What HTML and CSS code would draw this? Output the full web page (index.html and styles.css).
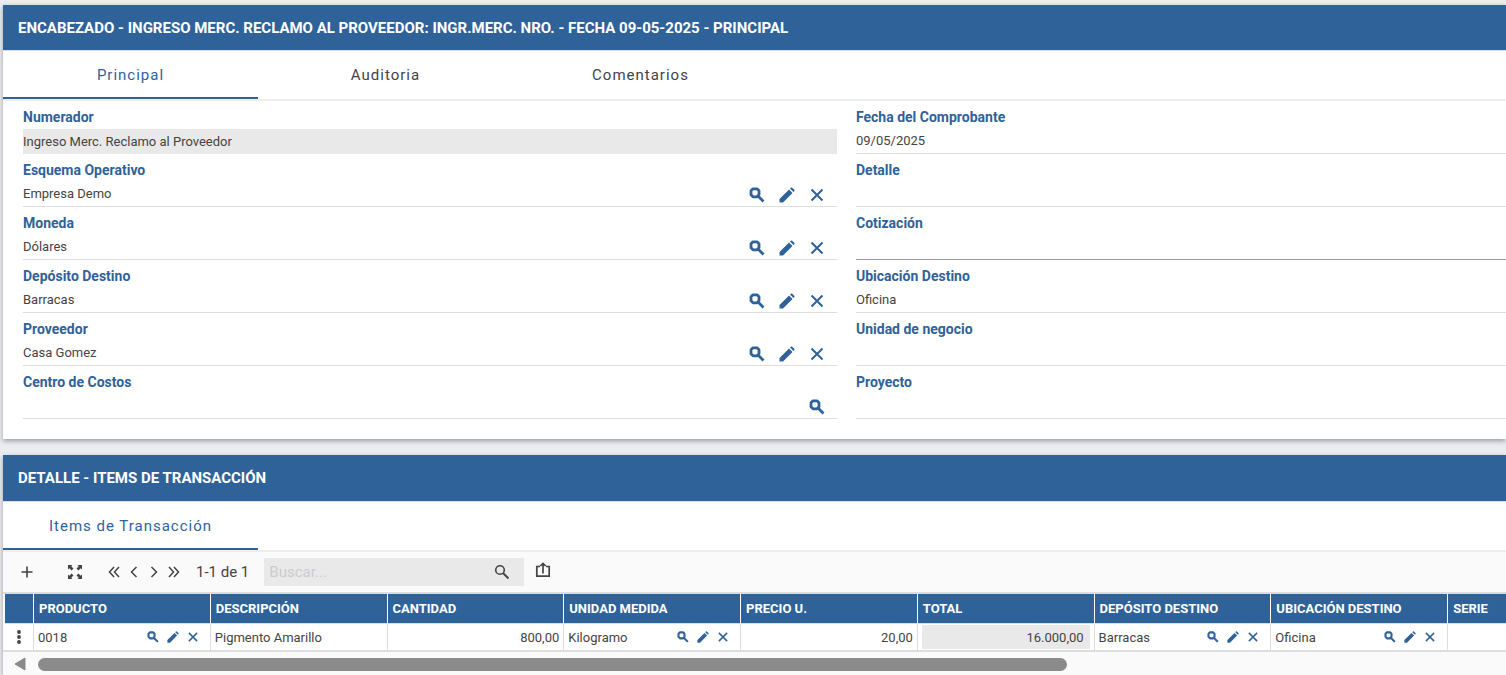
FILE: index.html
```
<!DOCTYPE html>
<html lang="es">
<head>
    <meta charset="utf-8">
    <title>Ingreso Merc. Reclamo al Proveedor</title>
    <link rel="stylesheet" href="styles.css">
</head>
<body>
    <!-- Shared icons -->
    <svg class="icon-defs" aria-hidden="true">
        <symbol id="search" viewBox="0 0 16 16"><path d="M4 1.800h4l2 2v4l-2 2H4l-2-2v-4zM9 9l5.500 5.500" fill="none" stroke="currentColor" stroke-width="2.800" stroke-linejoin="round"/></symbol>
        <symbol id="edit" viewBox="0 0 16 16"><path d="M.5 12 10 2.500 13.500 6 4 15.500H.5zM11 1.500l.8-.8q.7-.5 1.400 0l2.100 2.100q.5.700 0 1.400l-.8.8z" fill="currentColor"/></symbol>
        <symbol id="clear" viewBox="0 0 16 16"><path d="m2.500 2.500 11 11m0-11-11 11" fill="none" stroke="currentColor" stroke-width="2"/></symbol>
        <symbol id="plus" viewBox="0 0 16 16"><path d="M8 2.500v11M2.500 8h11" fill="none" stroke="currentColor" stroke-width="1.600"/></symbol>
        <symbol id="expand" viewBox="0 0 16 16"><path d="M1 1h4.500L4.200 2.300 6.500 4.600 4.600 6.500 2.300 4.200 1 5.500zM15 1v4.500l-1.300-1.300-2.300 2.300-1.900-1.900 2.300-2.300L10.500 1zM1 15v-4.500l1.300 1.300 2.300-2.300 1.900 1.900-2.300 2.300L5.500 15zM15 15h-4.500l1.300-1.300-2.300-2.300 1.900-1.900 2.300 2.300 1.300-1.300z" fill="currentColor"/></symbol>
        <symbol id="first" viewBox="0 0 16 16"><path d="M8 3 3.500 8 8 13M13 3 8.500 8l4.500 5" fill="none" stroke="currentColor" stroke-width="1.500"/></symbol>
        <symbol id="prev" viewBox="0 0 16 16"><path d="m10.500 3-5 5 5 5" fill="none" stroke="currentColor" stroke-width="1.500"/></symbol>
        <symbol id="next" viewBox="0 0 16 16"><path d="m5.500 3 5 5-5 5" fill="none" stroke="currentColor" stroke-width="1.500"/></symbol>
        <symbol id="last" viewBox="0 0 16 16"><path d="m3 3 4.500 5L3 13M8 3l4.500 5L8 13" fill="none" stroke="currentColor" stroke-width="1.500"/></symbol>
        <symbol id="find" viewBox="0 0 16 16"><circle cx="6" cy="6" r="4.300" fill="none" stroke="currentColor" stroke-width="1.600"/><path d="m9 9 5.500 5.500" stroke="currentColor" stroke-width="2"/></symbol>
        <symbol id="export" viewBox="0 0 16 16"><path d="M5 4.500H1.800v9.700h12.400V4.500H11M8 11.500V2M5.300 4 8 1.500 10.700 4" fill="none" stroke="currentColor" stroke-width="1.700"/></symbol>
        <symbol id="more" viewBox="0 0 16 16"><g fill="currentColor"><circle cx="8" cy="3" r="1.900"/><circle cx="8" cy="8" r="1.900"/><circle cx="8" cy="13" r="1.900"/></g></symbol>
    </svg>

    <section class="panel">
        <h2 class="panel-title">ENCABEZADO - INGRESO MERC. RECLAMO AL PROVEEDOR: INGR.MERC. NRO. - FECHA 09-05-2025 - PRINCIPAL</h2>
        <nav class="tabs">
            <a href="#" class="tab active">Principal</a>
            <a href="#" class="tab">Auditoria</a>
            <a href="#" class="tab">Comentarios</a>
        </nav>
        <form class="fields">
            <div class="field">
                <label for="numerador">Numerador</label>
                <div class="control readonly"><input type="text" id="numerador" value="Ingreso Merc. Reclamo al Proveedor" readonly></div>
            </div>
            <div class="field">
                <label for="fecha">Fecha del Comprobante</label>
                <div class="control"><input type="text" id="fecha" value="09/05/2025"></div>
            </div>
            <div class="field">
                <label for="esquema">Esquema Operativo</label>
                <div class="control">
                    <input type="text" id="esquema" value="Empresa Demo">
                    <button type="button" aria-label="Buscar"><svg><use href="#search"/></svg></button>
                    <button type="button" aria-label="Editar"><svg><use href="#edit"/></svg></button>
                    <button type="button" aria-label="Borrar"><svg><use href="#clear"/></svg></button>
                </div>
            </div>
            <div class="field">
                <label for="detalle">Detalle</label>
                <div class="control"><input type="text" id="detalle"></div>
            </div>
            <div class="field">
                <label for="moneda">Moneda</label>
                <div class="control">
                    <input type="text" id="moneda" value="Dólares">
                    <button type="button" aria-label="Buscar"><svg><use href="#search"/></svg></button>
                    <button type="button" aria-label="Editar"><svg><use href="#edit"/></svg></button>
                    <button type="button" aria-label="Borrar"><svg><use href="#clear"/></svg></button>
                </div>
            </div>
            <div class="field">
                <label for="cotizacion">Cotización</label>
                <div class="control dark-line"><input type="text" id="cotizacion"></div>
            </div>
            <div class="field">
                <label for="deposito">Depósito Destino</label>
                <div class="control">
                    <input type="text" id="deposito" value="Barracas">
                    <button type="button" aria-label="Buscar"><svg><use href="#search"/></svg></button>
                    <button type="button" aria-label="Editar"><svg><use href="#edit"/></svg></button>
                    <button type="button" aria-label="Borrar"><svg><use href="#clear"/></svg></button>
                </div>
            </div>
            <div class="field">
                <label for="ubicacion">Ubicación Destino</label>
                <div class="control"><input type="text" id="ubicacion" value="Oficina"></div>
            </div>
            <div class="field">
                <label for="proveedor">Proveedor</label>
                <div class="control">
                    <input type="text" id="proveedor" value="Casa Gomez">
                    <button type="button" aria-label="Buscar"><svg><use href="#search"/></svg></button>
                    <button type="button" aria-label="Editar"><svg><use href="#edit"/></svg></button>
                    <button type="button" aria-label="Borrar"><svg><use href="#clear"/></svg></button>
                </div>
            </div>
            <div class="field">
                <label for="unidad">Unidad de negocio</label>
                <div class="control"><input type="text" id="unidad"></div>
            </div>
            <div class="field">
                <label for="centro">Centro de Costos</label>
                <div class="control">
                    <input type="text" id="centro">
                    <button type="button" aria-label="Buscar"><svg><use href="#search"/></svg></button>
                </div>
            </div>
            <div class="field">
                <label for="proyecto">Proyecto</label>
                <div class="control"><input type="text" id="proyecto"></div>
            </div>
        </form>
    </section>

    <section class="panel detail">
        <h2 class="panel-title">DETALLE - ITEMS DE TRANSACCIÓN</h2>
        <nav class="tabs">
            <a href="#" class="tab active">Items de Transacción</a>
        </nav>
        <div class="toolbar">
            <button type="button" aria-label="Agregar"><svg><use href="#plus"/></svg></button>
            <button type="button" aria-label="Expandir"><svg><use href="#expand"/></svg></button>
            <div class="pager">
                <button type="button" aria-label="Primera"><svg><use href="#first"/></svg></button>
                <button type="button" aria-label="Anterior"><svg><use href="#prev"/></svg></button>
                <button type="button" aria-label="Siguiente"><svg><use href="#next"/></svg></button>
                <button type="button" aria-label="Última"><svg><use href="#last"/></svg></button>
            </div>
            <span class="count">1-1 de 1</span>
            <div class="search-box">
                <input type="text" placeholder="Buscar..." aria-label="Buscar">
                <button type="button" aria-label="Buscar"><svg><use href="#find"/></svg></button>
            </div>
            <button type="button" class="export" aria-label="Exportar"><svg><use href="#export"/></svg></button>
        </div>
        <div class="grid-wrap">
            <table class="items">
                <colgroup>
                    <col class="col-menu"><col><col><col><col><col><col><col><col><col>
                </colgroup>
                <thead>
                    <tr>
                        <th></th>
                        <th>PRODUCTO</th>
                        <th>DESCRIPCIÓN</th>
                        <th>CANTIDAD</th>
                        <th>UNIDAD MEDIDA</th>
                        <th>PRECIO U.</th>
                        <th>TOTAL</th>
                        <th>DEPÓSITO DESTINO</th>
                        <th>UBICACIÓN DESTINO</th>
                        <th>SERIE</th>
                    </tr>
                </thead>
                <tbody>
                    <tr>
                        <td class="menu"><button type="button" aria-label="Acciones"><svg><use href="#more"/></svg></button></td>
                        <td>
                            <div class="lookup">
                                <span>0018</span>
                                <button type="button" aria-label="Buscar"><svg><use href="#search"/></svg></button>
                                <button type="button" aria-label="Editar"><svg><use href="#edit"/></svg></button>
                                <button type="button" aria-label="Borrar"><svg><use href="#clear"/></svg></button>
                            </div>
                        </td>
                        <td>Pigmento Amarillo</td>
                        <td class="number">800,00</td>
                        <td>
                            <div class="lookup">
                                <span>Kilogramo</span>
                                <button type="button" aria-label="Buscar"><svg><use href="#search"/></svg></button>
                                <button type="button" aria-label="Editar"><svg><use href="#edit"/></svg></button>
                                <button type="button" aria-label="Borrar"><svg><use href="#clear"/></svg></button>
                            </div>
                        </td>
                        <td class="number">20,00</td>
                        <td class="number"><div class="total">16.000,00</div></td>
                        <td>
                            <div class="lookup">
                                <span>Barracas</span>
                                <button type="button" aria-label="Buscar"><svg><use href="#search"/></svg></button>
                                <button type="button" aria-label="Editar"><svg><use href="#edit"/></svg></button>
                                <button type="button" aria-label="Borrar"><svg><use href="#clear"/></svg></button>
                            </div>
                        </td>
                        <td>
                            <div class="lookup">
                                <span>Oficina</span>
                                <button type="button" aria-label="Buscar"><svg><use href="#search"/></svg></button>
                                <button type="button" aria-label="Editar"><svg><use href="#edit"/></svg></button>
                                <button type="button" aria-label="Borrar"><svg><use href="#clear"/></svg></button>
                            </div>
                        </td>
                        <td></td>
                    </tr>
                </tbody>
            </table>
        </div>
        <div class="scrollbar">
            <svg class="arrow" viewBox="0 0 12 14"><path d="M11 1v12L1 7z" fill="#8b8b8b" stroke="#8b8b8b" stroke-linejoin="round"/></svg>
            <div class="thumb"></div>
        </div>
    </section>
</body>
</html>
```
FILE: styles.css
```
body {
    margin: 0;
    padding: 5px 0 0 3px;
    font-family: Roboto, "Liberation Sans", sans-serif;
    font-size: 13px;
    color: #444;
    background-color: #ebecf1;
}

* {
    box-sizing: border-box;
}

input {
    font: inherit;
    color: inherit;
    border: 0;
    padding: 0;
    background: none;
    outline: none;
}

button {
    display: flex;
    align-items: center;
    justify-content: center;
    border: 0;
    padding: 0;
    background: none;
    color: inherit;
    cursor: pointer;
}

button svg {
    display: block;
    width: 16px;
    height: 16px;
}

.icon-defs {
    display: none;
}

/* Panels */
.panel {
    background-color: #fff;
    margin-bottom: 16px;
    box-shadow: 0 2px 5px rgba(0, 0, 0, 0.35);
}

.panel-title {
    margin: 0;
    padding: 1px 15px 0;
    font-size: 15px;
    font-weight: bold;
    line-height: 44px;
    color: #fff;
    background-color: #2f6299;
    border-bottom: 1px solid #dcdfe5;
}

.tabs {
    display: flex;
    height: 50px;
    border-bottom: 2px solid #eee;
}

.tab {
    width: 255px;
    font-size: 15px;
    line-height: 48px;
    letter-spacing: 1px;
    text-align: center;
    text-decoration: none;
    color: #444;
}

.tab.active {
    color: #2f6299;
    border-bottom: 2px solid #2f6299;
}

/* Header form */
.fields {
    display: grid;
    grid-template-columns: 139fr 111fr;
    column-gap: 19px;
    padding: 0 0 20px 20px;
}

.field {
    padding-top: 8px;
}

.field label {
    display: block;
    margin-bottom: 4px;
    font-size: 14px;
    font-weight: bold;
    line-height: 16px;
    color: #2f6299;
}

.control {
    display: flex;
    align-items: center;
    gap: 14px;
    height: 25px;
    padding-right: 12px;
    border-bottom: 1px solid #ddd;
}

.control input {
    flex: 1;
    height: 24px;
    padding-bottom: 2px;
}

.control button {
    margin-top: 2px;
    color: #2f6299;
}

.control.readonly {
    background-color: #e9e9e9;
    border-color: #e9e9e9;
}

.control.readonly input {
    padding-bottom: 0;
}

.control.dark-line {
    border-color: #999;
}

/* Item list */
.detail {
    background-color: #fafafa;
    min-height: 220px;
    margin-bottom: 0;
}

.detail .panel-title {
    line-height: 45px;
}

.detail .tabs {
    background-color: #fff;
}

.toolbar {
    display: flex;
    align-items: center;
    height: 40px;
    padding-left: 14px;
    gap: 28px;
}

.toolbar button {
    width: 20px;
    height: 20px;
}

.pager {
    display: flex;
    margin-left: -9px;
}

.count {
    margin-left: -16px;
    font-size: 15px;
}

.search-box {
    display: flex;
    align-items: center;
    width: 260px;
    height: 28px;
    margin-left: -13px;
    padding: 0 12px 0 5px;
    background-color: #e9e9e9;
}

.search-box input {
    flex: 1;
    font-size: 15px;
}

.search-box input::placeholder {
    color: #ccc;
}

.toolbar .export {
    margin: 0 0 4px -19px;
}

.grid-wrap {
    overflow: hidden;
    padding-left: 2px;
    border-top: 2px solid #ddd;
    border-bottom: 2px solid #ddd;
}

.items {
    table-layout: fixed;
    width: 1620px;
    border-collapse: separate;
    border-spacing: 0;
    background-color: #fff;
}

.col-menu {
    width: 29px;
}

.items th {
    height: 30px;
    padding: 0 5px;
    font-weight: bold;
    text-align: left;
    color: #fff;
    background-color: #2f6299;
    border-right: 1px solid #fff;
    border-bottom: 1px solid #ddd;
}

.items td {
    height: 26px;
    padding: 0 4px;
    border-right: 1px solid #ddd;
}

.items .number {
    text-align: right;
}

.items .menu {
    padding: 0 6px;
}

.lookup {
    display: flex;
    align-items: center;
    gap: 8px;
    padding-right: 7px;
}

.lookup span {
    flex: 1;
}

.lookup button {
    color: #2f6299;
}

.lookup svg {
    width: 12px;
    height: 12px;
}

.total {
    height: 24px;
    padding: 0 6px;
    line-height: 26px;
    background-color: #e9e9e9;
}

.scrollbar {
    display: flex;
    align-items: center;
    gap: 12px;
    padding: 5px 0 4px 11px;
}

.arrow {
    width: 12px;
    height: 14px;
}

.thumb {
    width: 69%;
    height: 13px;
    border-radius: 7px;
    background-color: #8b8b8b;
}
```
